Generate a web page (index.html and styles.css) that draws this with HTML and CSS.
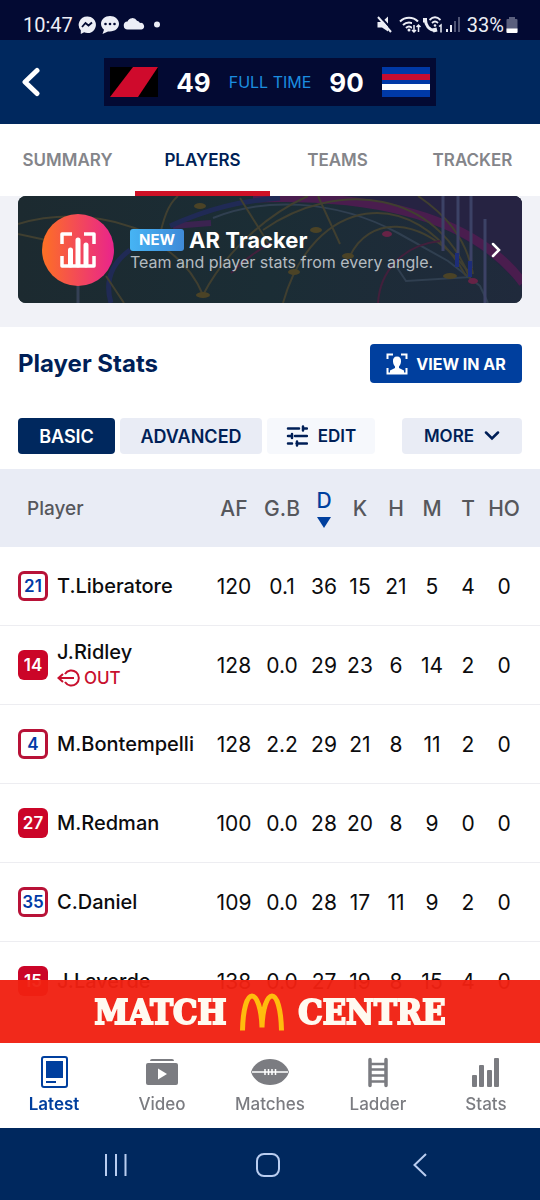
FILE: index.html
```html
<!DOCTYPE html>
<html lang="en">
<head>
    <meta charset="utf-8">
    <meta name="viewport" content="width=device-width, initial-scale=1">
    <title>Match Centre - Player Stats</title>
    <link rel="stylesheet" href="styles.css">
</head>
<body>
    <div class="status-bar">
        <span class="clock">10:47</span>
        <svg class="status-left" width="90" height="20" viewBox="0 0 90 20" fill="#eceef6">
            <path d="M10 1.500a8.300 8.300 0 0 0-6.200 13.800V19l3.300-1.700A8.300 8.300 0 1 0 10 1.500z"/>
            <path d="M5 12l3.500-4 3 2.500L15 7.500" fill="none" stroke="#030a33" stroke-width="1.800"/>
            <path d="M33 1c-5 0-9 3.400-9 7.800 0 2.500 1.200 4.500 3 5.900L25.500 19l5.500-2.600c6.500.8 11-2.900 11-7.600C42 4.400 38 1 33 1z"/>
            <g fill="#030a33"><circle cx="28.500" cy="9" r="1.300"/><circle cx="33" cy="9" r="1.300"/><circle cx="37.500" cy="9" r="1.300"/></g>
            <path d="M51 14.500a4 4 0 0 1-.5-8 5.300 5.300 0 0 1 9.500-.8 4.500 4.500 0 0 1 3 2.300 3.300 3.300 0 0 1 1.500 6.500z"/>
            <circle cx="80" cy="9.500" r="3"/>
        </svg>
        <svg class="status-right" width="86" height="20" viewBox="0 0 86 20" fill="none" stroke="#eceef6">
            <path d="M1.500 7H6l6-5.500v15L6 12.500H1.500z" fill="#eceef6" stroke="none"/>
            <path d="M4 1.500l13 14" stroke="#030a33" stroke-width="2"/>
            <path d="M2 2l13 15" stroke-width="2"/>
            <path d="M24 6.500c5-5 13-5 18 0M27 10c3.500-3.500 8.500-3.500 12 0M30 13c2-2 4-2 6 0" stroke-width="2"/>
            <circle cx="33" cy="15" r="1.500" fill="#eceef6" stroke="none"/>
            <path d="M36 7h9v11h-9z" fill="#030a33" stroke="none"/>
            <path d="M38 10v7m-2-2l2 2 2-2M42.500 17v-7m-2 2l2-2 2 2" stroke-width="1.500"/>
            <path d="M49.500 5c0 5.500 3.500 10 9.500 10.500" stroke-width="3"/>
            <path d="M49 3v4.500M57 15.500l4-1" stroke-width="4"/>
            <path d="M53.500 5c3.500-3.500 7.500-3.500 11 0M56 8c2-2 4-2 6 0" stroke-width="1.800"/>
            <circle cx="59" cy="10.500" r="1.300" fill="#eceef6" stroke="none"/>
            <path d="M63 11.500l2-1.500v7.500" stroke-width="1.500"/>
            <path d="M71 14v3M75 10v7" stroke-width="2"/>
            <path d="M79 6v11M83 2v15" stroke-width="2" stroke="#4f5474"/>
        </svg>
        <span class="battery-text">33%</span>
        <svg width="12" height="16" viewBox="0 0 12 16">
            <path d="M3 0h6v2h1.500q1 0 1 1v12q0 1-1 1h-9q-1 0-1-1V3q0-1 1-1H3z" fill="#5a5f7d"/>
            <path d="M.5 11.500h11V15q0 1-1 1h-9q-1 0-1-1z" fill="#fff"/>
        </svg>
    </div>

    <header class="match-header">
        <button class="back-btn" aria-label="Back">
            <svg width="20" height="30" viewBox="0 0 20 30"><path d="M16 3.500L4 15l12 11.500" fill="none" stroke="#fff" stroke-width="5" stroke-linecap="round" stroke-linejoin="round"/></svg>
        </button>
        <div class="score-box">
            <svg width="48" height="30" viewBox="0 0 48 30"><path fill="#000" d="M0 0h48v30H0z"/><path fill="#cf0a2c" d="M23 0h25L28 30H0z"/></svg>
            <span class="score">49</span>
            <span class="match-state">FULL TIME</span>
            <span class="score">90</span>
            <svg width="48" height="30" viewBox="0 0 48 30"><path fill="#0039a6" d="M0 0h48v30H0z"/><path fill="#c60c30" d="M0 7h48v6H0z"/><path fill="#fff" d="M0 17h48v6H0z"/></svg>
        </div>
    </header>

    <nav class="tabs">
        <a href="#">SUMMARY</a>
        <a href="#" class="active">PLAYERS</a>
        <a href="#">TEAMS</a>
        <a href="#">TRACKER</a>
    </nav>

    <section class="promo">
        <a href="#" class="promo-card">
            <svg class="promo-art" viewBox="0 0 504 107" preserveAspectRatio="xMidYMid slice" fill="none">
                <defs>
                    <linearGradient id="field" x1="0" x2="1" y1="0" y2="0">
                        <stop offset="0" stop-color="#1c2a30"/><stop offset=".5" stop-color="#1b2d35"/><stop offset="1" stop-color="#202a3c"/>
                    </linearGradient>
                </defs>
                <path fill="url(#field)" d="M0 0h504v107H0z"/>
                <path d="M272 0c110 6 185 35 232 92V0z" fill="#262342"/>
                <path d="M235 2c120-4 220 18 270 85" stroke="#4a1d4e" stroke-width="9"/>
                <path d="M155 30l38-3" stroke="#3b2350" stroke-width="6"/>
                <path d="M195 22c50-20 120-20 185 15l50 28 32 25 8 17M378 70l10 15 65-4" stroke="#303f50" stroke-width="2"/>
                <path d="M152 30c40-18 70-25 110-28M112 54C90 70 88 90 93 107" stroke="#202a55" stroke-width="5"/>
                <path d="M60 89v18" stroke="#344055" stroke-width="3"/>
                <g stroke="#403f30" stroke-width="2">
                    <path d="M0 28c40-12 90-10 130 10l35 10M0 38l28 6M88 80l18 27"/>
                    <path d="M185 99C175 75 160 60 140 48c5-25 10-40 20-48M185 99C205 60 245 20 290 0"/>
                    <path d="M222 2l30 48M300 0l22 48"/>
                    <path d="M245 34C320-18 420-5 452 83"/>
                    <path d="M265 107C295 0 395-15 448 80"/>
                    <path d="M332 60C350 22 400 15 450 75M400 0c25 17 48 40 55 78"/>
                </g>
                <path d="M360 107c2-32 25-58 62-62M213 77c12-12 25-22 40-30" stroke="#42203c" stroke-width="2"/>
                <g fill="#4b4326"><ellipse cx="182" cy="10" rx="6" ry="3"/><ellipse cx="185" cy="99" rx="7" ry="3"/><ellipse cx="298" cy="34" rx="6" ry="3"/><ellipse cx="330" cy="60" rx="6" ry="3"/><ellipse cx="276" cy="76" rx="6" ry="3"/><ellipse cx="432" cy="80" rx="7" ry="3"/></g>
                <g fill="#662346"><ellipse cx="369" cy="38" rx="5" ry="3"/><ellipse cx="455" cy="85" rx="5" ry="3"/></g>
                <path d="M425 0v55M440 0v60M453 0v72M467 23v84" stroke="#3c4266" stroke-width="3"/>
                <path d="M439 57v14M452 65v16" stroke="#1d2d78" stroke-width="4"/>
            </svg>
            <span class="promo-icon">
                <svg width="36" height="36" viewBox="0 0 36 36" fill="none" stroke="#fff" stroke-width="3.500">
                    <path d="M2 12V2h10M24 2h10v10M2 24v10h32V24" stroke-linejoin="round"/>
                    <path d="M10.500 18v15M18 8v25M26 13v20" stroke-width="5" stroke-linecap="round"/>
                </svg>
            </span>
            <span class="promo-text">
                <span class="promo-title"><span class="new-badge">NEW</span> AR Tracker</span>
                <span class="promo-sub">Team and player stats from every angle.</span>
            </span>
            <svg class="promo-arrow" width="12" height="16" viewBox="0 0 12 16"><path d="M3 2l6 6-6 6" fill="none" stroke="#fff" stroke-width="2.500" stroke-linecap="round"/></svg>
        </a>
    </section>

    <main class="stats">
        <div class="stats-head">
            <h2>Player Stats</h2>
            <button class="ar-btn">
                <svg width="22" height="22" viewBox="0 0 22 22"><path d="M1.500 6V1.500H7M15 1.500h5.500V6M1.500 15v5.500h19V15" fill="none" stroke="#fff" stroke-width="2"/><path d="M11 3.500c-3 0-4.300 2-4 5 .2 2.500 1 3.800 2 5V15l-5 2.500V21h14v-3.500L13 15v-1.500c1-1.200 1.800-2.500 2-5 .3-3-1-5-4-5z" fill="#fff"/></svg>
                VIEW IN AR
            </button>
        </div>

        <div class="filters">
            <button class="filter-btn basic">BASIC</button>
            <button class="filter-btn advanced">ADVANCED</button>
            <button class="filter-btn edit">
                <svg width="22" height="22" viewBox="0 0 22 22" fill="none" stroke="#001f57" stroke-width="2.500" stroke-linecap="round"><path d="M2 3.500h11M17 3.500h4M17 1.500v4M2 11h3M9 11h12M6 9v4M2 18.500h4M10.500 18.500H21M11 16.500v4"/></svg>
                EDIT
            </button>
            <button class="filter-btn more">
                MORE
                <svg width="16" height="10" viewBox="0 0 16 10"><path d="M2 1.500l6 6 6-6" fill="none" stroke="#001f57" stroke-width="2.500" stroke-linecap="round"/></svg>
            </button>
        </div>

        <table class="stats-table">
            <thead>
                <tr>
                    <th class="player-col">Player</th>
                    <th class="wide-col">AF</th>
                    <th class="wide-col">G.B</th>
                    <th class="sorted">D<span class="sort-arrow"></span></th>
                    <th>K</th>
                    <th>H</th>
                    <th>M</th>
                    <th>T</th>
                    <th class="last-col">HO</th>
                </tr>
            </thead>
            <tbody>
                <tr>
                    <td><div class="player"><span class="num dogs">21</span><span class="name">T.Liberatore</span></div></td>
                    <td>120</td><td>0.1</td><td>36</td><td>15</td><td>21</td><td>5</td><td>4</td><td>0</td>
                </tr>
                <tr>
                    <td><div class="player"><span class="num dons">14</span><span class="name">J.Ridley
                        <span class="out"><svg width="24" height="18" viewBox="0 0 24 18" fill="none" stroke="#c8102e" stroke-width="2"><path d="M17 9H1.500M6 5L1.500 9 6 13M8 5a7.500 7.500 0 1 1 0 8"/></svg>OUT</span></span></div></td>
                    <td>128</td><td>0.0</td><td>29</td><td>23</td><td>6</td><td>14</td><td>2</td><td>0</td>
                </tr>
                <tr>
                    <td><div class="player"><span class="num dogs">4</span><span class="name">M.Bontempelli</span></div></td>
                    <td>128</td><td>2.2</td><td>29</td><td>21</td><td>8</td><td>11</td><td>2</td><td>0</td>
                </tr>
                <tr>
                    <td><div class="player"><span class="num dons">27</span><span class="name">M.Redman</span></div></td>
                    <td>100</td><td>0.0</td><td>28</td><td>20</td><td>8</td><td>9</td><td>0</td><td>0</td>
                </tr>
                <tr>
                    <td><div class="player"><span class="num dogs">35</span><span class="name">C.Daniel</span></div></td>
                    <td>109</td><td>0.0</td><td>28</td><td>17</td><td>11</td><td>9</td><td>2</td><td>0</td>
                </tr>
                <tr>
                    <td><div class="player"><span class="num dons">15</span><span class="name">J.Laverde</span></div></td>
                    <td>138</td><td>0.0</td><td>27</td><td>19</td><td>8</td><td>15</td><td>4</td><td>0</td>
                </tr>
            </tbody>
        </table>
    </main>

    <!-- sits over the end of the list -->
    <footer class="dock">
        <a href="#" class="sponsor">
            <span>MATCH</span>
            <svg width="46" height="38" viewBox="0 0 46 38" fill="none" stroke="#ffbc0d" stroke-width="5"><path d="M3.500 37.500C4 16 8 3 13 3s9.500 13 10 31.500C23.500 16 28 3 33 3s9 13 9.500 34.500"/></svg>
            <span>CENTRE</span>
        </a>
        <nav class="bottom-nav">
            <a href="#" class="active">
                <svg width="32" height="32" viewBox="0 0 32 32"><rect x="4" y="1" width="25" height="30" rx="2" fill="none" stroke="#003f9e" stroke-width="2"/><path d="M8 5h17v17H8zM8 25h10v2H8z" fill="#003f9e"/></svg>
                Latest
            </a>
            <a href="#">
                <svg width="32" height="32" viewBox="0 0 32 32" fill="#7b7c81"><path d="M4 5q0-2 2-2h20q2 0 2 2z"/><rect y="7" width="32" height="22" rx="2"/><path d="M12 12.500v11l9-5.500z" fill="#fff"/></svg>
                Video
            </a>
            <a href="#">
                <svg width="38" height="32" viewBox="0 0 38 32"><path d="M0 16C3 7 11 3 19 3s16 4 19 13c-3 9-11 13-19 13S3 25 0 16z" fill="#7b7c81"/><path d="M1 16h36M14 13v6M17.500 13v6M21 13v6M24.500 13v6" stroke="#fff" stroke-width="1.500"/></svg>
                Matches
            </a>
            <a href="#">
                <svg width="32" height="32" viewBox="0 0 32 32" fill="none" stroke="#7b7c81"><path d="M8 3.500v26M24 3.500v26" stroke-width="3.500" stroke-linecap="round"/><path d="M8 8h16M8 13.500h16M8 19.500h16M8 25.500h16" stroke-width="2.500"/></svg>
                Ladder
            </a>
            <a href="#">
                <svg width="32" height="32" viewBox="0 0 32 32" fill="#7b7c81"><rect x="2" y="19" width="5" height="12" rx="1"/><rect x="9" y="9" width="5" height="22" rx="1"/><rect x="17" y="14" width="5" height="17" rx="1"/><rect x="24" y="2" width="5" height="29" rx="1"/></svg>
                Stats
            </a>
        </nav>
        <div class="system-nav">
            <button aria-label="Recent apps"><svg width="24" height="24" viewBox="0 0 24 24"><path d="M2 1v22M12 1v22M21.500 1v22" stroke="#b9cdf0" stroke-width="2"/></svg></button>
            <button aria-label="Home"><svg width="24" height="24" viewBox="0 0 24 24"><rect x="1" y="1" width="22" height="22" rx="7" fill="none" stroke="#b9cdf0" stroke-width="2"/></svg></button>
            <button aria-label="Back"><svg width="24" height="24" viewBox="0 0 24 24"><path d="M18 1L6.500 12 18 23" fill="none" stroke="#b9cdf0" stroke-width="2"/></svg></button>
        </div>
    </footer>
</body>
</html>
```
FILE: styles.css
```css
* {
    box-sizing: border-box;
}
body {
    margin: 0;
    padding-bottom: 157px;
    font-family: Inter, "Liberation Sans", sans-serif;
    background: #fff;
    color: #0c0c0e;
}
a {
    text-decoration: none;
    color: inherit;
}
button {
    font-family: inherit;
    border: none;
    padding: 0;
    cursor: pointer;
}
svg {
    display: block;
    flex-shrink: 0;
}

/* phone status bar */
.status-bar {
    display: flex;
    align-items: center;
    height: 40px;
    padding: 10px 22px 0 23px;
    background: #030a33;
    color: #eceef6;
    font-family: Roboto, sans-serif;
    font-size: 20px;
}
.status-left {
    margin-left: 4px;
}
.status-right {
    margin-left: auto;
}
.battery-text {
    margin: 0 2px 0 5px;
}

/* score header */
.match-header {
    display: grid;
    grid-template-columns: 1fr auto 1fr;
    align-items: center;
    height: 84px;
    padding: 0 21px;
    background: #00285e;
}
.back-btn {
    justify-self: start;
    background: none;
}
.score-box {
    display: flex;
    align-items: center;
    gap: 18px;
    height: 48px;
    padding: 0 6px;
    background: #030a33;
}
.score {
    color: #fff;
    font-size: 26px;
    font-weight: 700;
}
.match-state {
    color: #1b8ee0;
    font-size: 16px;
}

.tabs {
    display: grid;
    grid-template-columns: repeat(4, 1fr);
    height: 72px;
    font-size: 17px;
    font-weight: 600;
    color: #84858a;
}
.tabs a {
    display: flex;
    align-items: center;
    justify-content: center;
    border-top: 5px solid transparent;
    border-bottom: 5px solid transparent;
}
.tabs .active {
    color: #001f57;
    border-bottom-color: #cf1126;
}

/* AR promo */
.promo {
    padding: 0 18px 24px;
    background: #f1f2f7;
}
.promo-card {
    position: relative;
    display: flex;
    align-items: center;
    height: 107px;
    padding: 0 20px 0 24px;
    border-radius: 8px;
    overflow: hidden;
    background: #1c2a30;
    color: #fff;
}
.promo-art {
    position: absolute;
    top: 0;
    left: 0;
    width: 100%;
    height: 100%;
}
.promo-icon {
    position: relative;
    display: flex;
    align-items: center;
    justify-content: center;
    width: 72px;
    height: 72px;
    border-radius: 50%;
    background: linear-gradient(90deg, #fd7024, #e9248c);
}
.promo-text {
    position: relative;
    flex: 1;
    margin-left: 16px;
}
.promo-title {
    display: flex;
    align-items: center;
    gap: 5px;
    font-size: 22px;
    line-height: 24px;
    font-weight: 700;
}
.new-badge {
    padding: 0 9px;
    border-radius: 3px;
    background: linear-gradient(90deg, #46b4f4, #3f8ad8);
    font-size: 15px;
    line-height: 22px;
}
.promo-sub {
    display: block;
    font-size: 16px;
    line-height: 20px;
    color: #b4bbc0;
}
.promo-arrow {
    position: relative;
}

/* player stats */
.stats-head {
    display: flex;
    align-items: center;
    justify-content: space-between;
    padding: 17px 18px 0;
}
.stats-head h2 {
    margin: 0;
    font-size: 24px;
    font-weight: 700;
    color: #001f57;
}
.ar-btn {
    display: flex;
    align-items: center;
    justify-content: center;
    gap: 8px;
    width: 152px;
    height: 39px;
    border-radius: 4px;
    background: #003f9e;
    color: #fff;
    font-size: 16px;
    font-weight: 700;
}
.filters {
    display: flex;
    gap: 5px;
    padding: 35px 18px 15px;
}
.filter-btn {
    display: flex;
    align-items: center;
    justify-content: center;
    gap: 10px;
    height: 36px;
    border-radius: 4px;
    background: #e9ecf5;
    color: #001f57;
    font-size: 17px;
    font-weight: 600;
}
.basic {
    width: 97px;
    background: #00285e;
    color: #fff;
    font-size: 18px;
}
.advanced {
    width: 142px;
    font-size: 18px;
}
.edit {
    width: 108px;
    background: #f6f8fc;
}
.more {
    width: 120px;
    margin-left: auto;
}

.stats-table {
    width: 100%;
    table-layout: fixed;
    border-spacing: 0;
    font-size: 21px;
}
.stats-table th {
    width: 36px;
    height: 78px;
    padding: 0;
    background: #e9ecf5;
    color: #56575c;
    font-weight: 500;
}
.stats-table th.player-col {
    width: auto;
    padding-left: 27px;
    font-size: 19px;
    text-align: left;
}
.stats-table th.wide-col {
    width: 48px;
}
.stats-table th.last-col {
    width: 54px;
}
.stats-table th.sorted {
    color: #003f9e;
}
.sort-arrow {
    display: block;
    width: 14px;
    margin: 4px auto 0;
    border: 7px solid transparent;
    border-top: 11px solid #003f9e;
    border-bottom: none;
}
.stats-table td {
    height: 79px;
    padding: 0;
    text-align: center;
    border-bottom: 1px solid #ededf1;
}
.stats-table th:last-child,
.stats-table td:last-child {
    padding-right: 18px;
}
.player {
    display: flex;
    align-items: center;
    gap: 9px;
    padding-left: 18px;
    text-align: left;
}
.num {
    display: flex;
    align-items: center;
    justify-content: center;
    width: 30px;
    height: 30px;
    border-radius: 6px;
    font-size: 17px;
    font-weight: 600;
}
.dogs {
    border: 3px solid #b81237;
    color: #0039a6;
}
.dons {
    background: #cb0528;
    color: #fff;
}
.name {
    font-size: 20px;
    line-height: 26px;
    font-weight: 500;
}
.out {
    display: flex;
    align-items: center;
    gap: 3px;
    font-size: 17px;
    color: #c8102e;
}

/* bottom dock */
.dock {
    position: fixed;
    left: 0;
    right: 0;
    bottom: 0;
}
.sponsor {
    display: flex;
    align-items: center;
    justify-content: center;
    gap: 13px;
    height: 63px;
    background: rgba(240, 32, 18, 0.96);
    color: #fffaf0;
    font-family: "DejaVu Serif Condensed", "DejaVu Serif", serif;
    font-size: 34px;
    font-weight: 700;
    -webkit-text-stroke: 2px #fffaf0;
}
.bottom-nav {
    display: grid;
    grid-template-columns: repeat(5, 1fr);
    height: 85px;
    padding-top: 13px;
    background: #fff;
    color: #7b7c81;
    font-size: 17px;
    font-weight: 500;
}
.bottom-nav a {
    display: flex;
    flex-direction: column;
    align-items: center;
    gap: 6px;
}
.bottom-nav .active {
    color: #003f9e;
    font-weight: 600;
}
.system-nav {
    display: flex;
    justify-content: center;
    gap: 128px;
    height: 72px;
    padding: 2px 4px 0 0;
    background: #00285e;
}
.system-nav button {
    background: none;
}
```
